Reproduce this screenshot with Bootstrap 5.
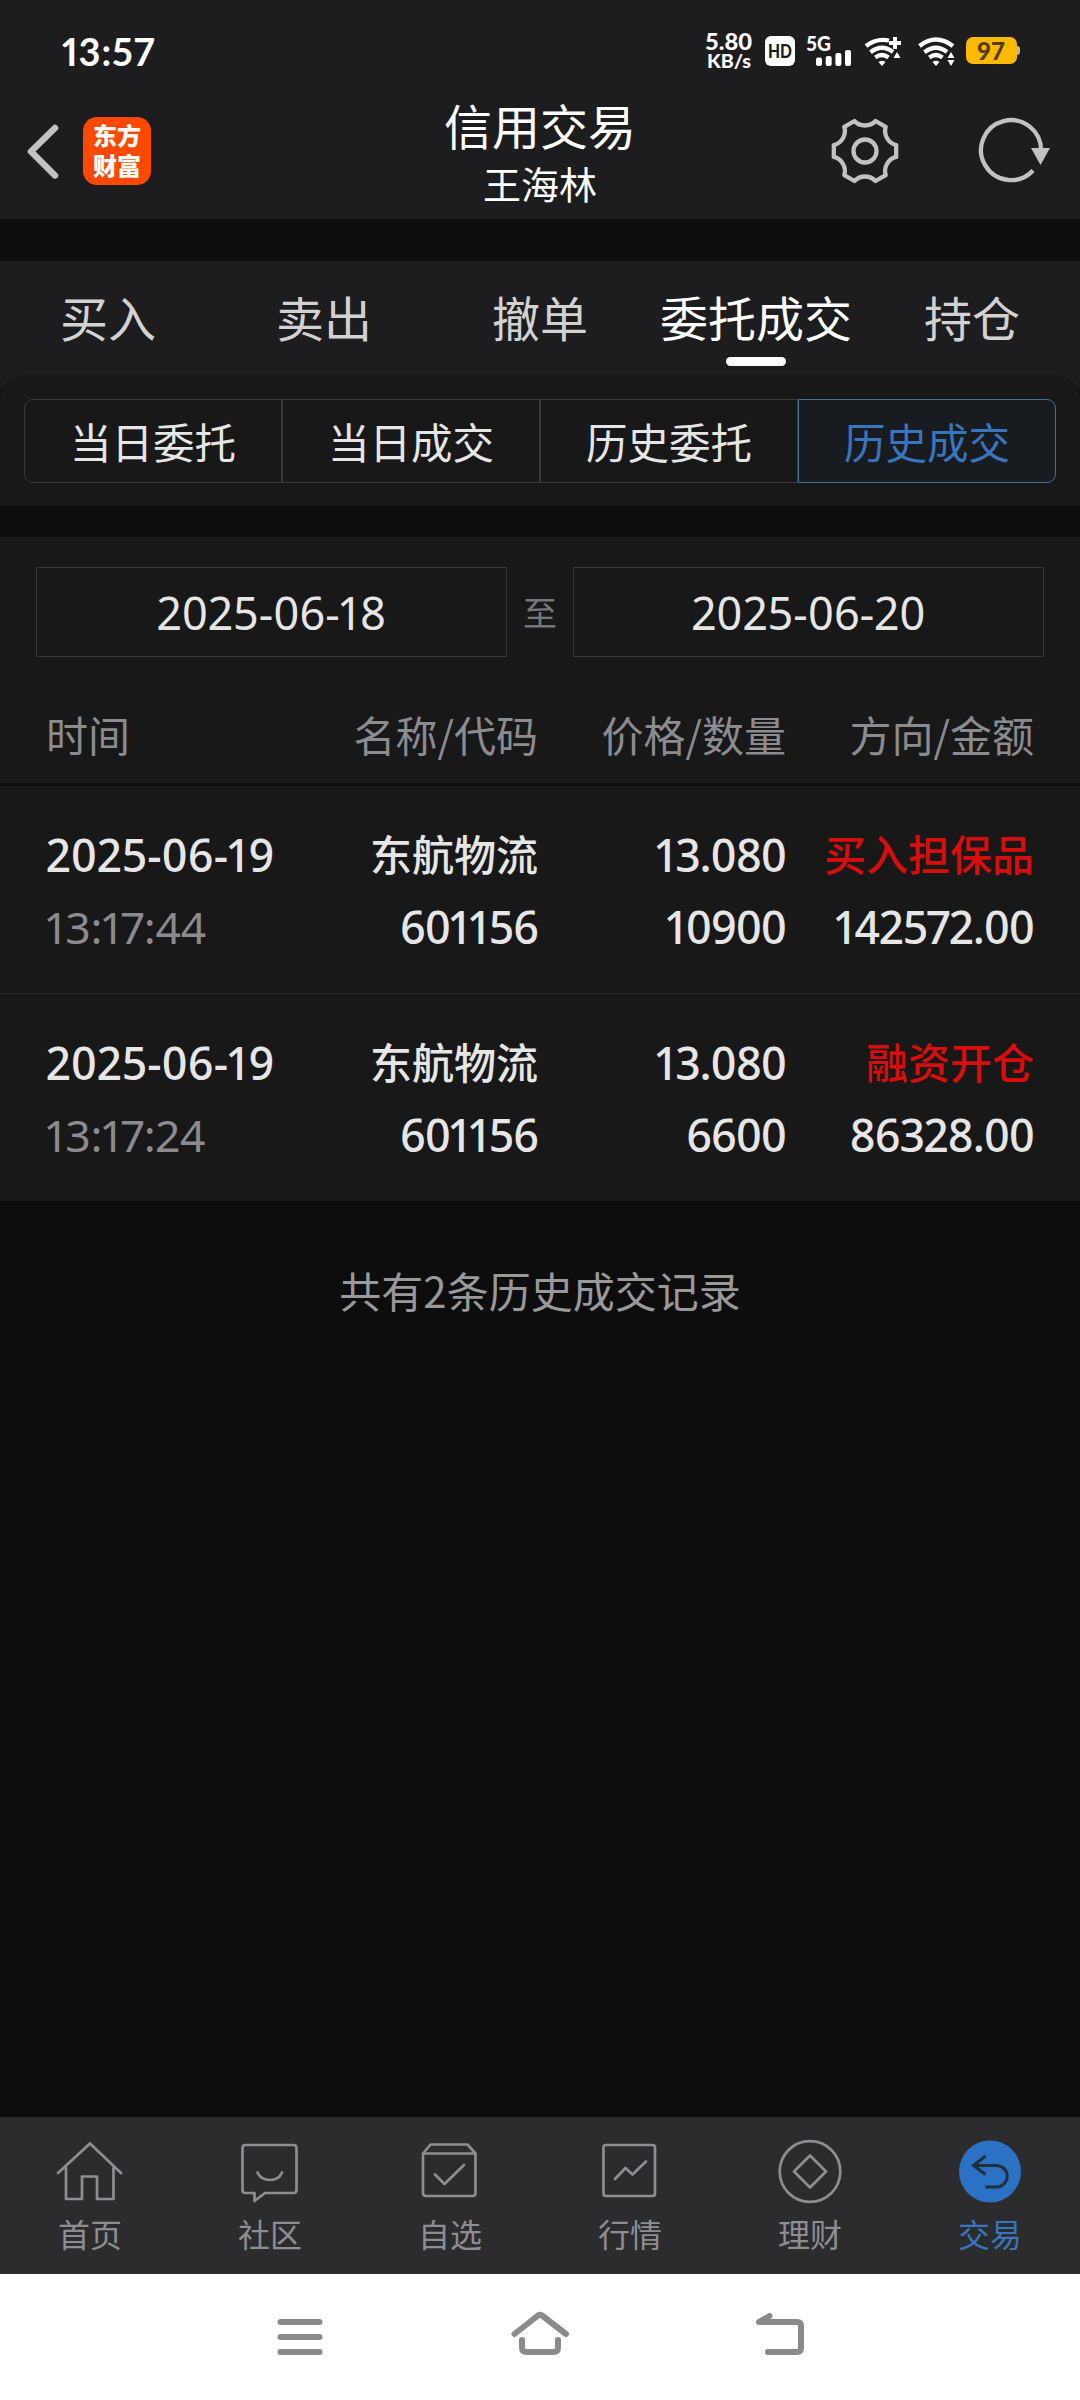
<!DOCTYPE html>
<html lang="zh-CN">
<head>
<meta charset="utf-8">
<meta name="viewport" content="width=device-width, initial-scale=1">
<title>信用交易</title>
<link rel="stylesheet" href="https://cdn.jsdelivr.net/npm/bootstrap@5.3.0/dist/css/bootstrap.min.css">
<style>
:root{--bar:#1d1d1f;--panel:#181818;--ground:#0d0d0d;--line:#383838;--ink:#e6e6e6;--dim:#8b8b90;--blue:#3875bd}
body{width:1080px;height:2400px;background:var(--ground);color:var(--ink);font-family:"Noto Sans CJK SC",sans-serif;font-size:42px;line-height:1;overflow:hidden}
svg{display:block;flex:none;overflow:visible}
.topbar{height:219px;background:var(--bar);color:#fff}
.statusbar{height:96px;padding:5px 60px 0 60px;font-family:Lato,"Noto Sans CJK SC",sans-serif}
.clock{font-size:38px;font-weight:700;font-feature-settings:"pnum";letter-spacing:.9px;padding-left:2px}
.titlebar{height:110px}
.titlebar>div{height:110px}
.titlebar-title{font-size:48px;line-height:57px}
.titlebar-user{font-size:38px;line-height:60px}
.brand-tile{width:68px;height:68px;border-radius:14px;background:#ff4800;font-size:24px;font-weight:900;line-height:30px;padding-top:3px;margin-left:24px}
.tabs-main{height:114px;margin-top:42px;background:var(--bar);font-size:48px;color:#d2d2d2}
.tabs-main .nav-link{width:216px;height:114px;padding:0;line-height:111px;color:inherit;position:relative;white-space:nowrap}
.tabs-main .nav-link.active{color:#fff}
.tabs-main .nav-link.active::after{content:"";position:absolute;left:78px;top:96px;width:60px;height:9px;border-radius:4.5px;background:#fff}
.seg-wrap{height:131px;background:linear-gradient(var(--bar) 15px,var(--ground) 15px)}
.seg-panel{height:131px;background:var(--panel);border-radius:24px 24px 0 0;padding:24px 24px 0}
.seg-panel .btn-group{height:84px}
.seg-panel .btn{flex:1 1 0;padding:0;font-size:41.5px;line-height:79px;color:var(--ink);border:1px solid var(--line);border-radius:9px;white-space:nowrap}
.seg-panel .btn-group>.btn:not(:first-child){margin-left:0}
.seg-panel .btn.active{color:var(--blue);border-color:#42719f;background:#181b20}
.records{margin-top:31px;background:var(--panel)}
.range-row{padding:30px 36px 0}
.date-box{width:471px;height:90px;border:1px solid var(--line);line-height:90px;font-family:"Noto Sans",sans-serif;font-feature-settings:"pnum";font-size:45px}
.range-sep{font-size:34px;color:#77777b}
.grid4{display:grid;grid-template-columns:236px 256px 248px 248px;padding:0 46px}
.grid4>*{white-space:nowrap;text-align:right}
.grid4>:first-child{text-align:left}
.thead-row{height:129px;line-height:154px;color:var(--dim);border-bottom:3px solid var(--ground)}
.trade{height:208px;padding-top:31px;line-height:72px;font-weight:500;border-bottom:1px solid #292929}
.trade:last-child{height:207px;border:0}
.trade div>div{height:72px}
.num{font-family:"Noto Sans",sans-serif;font-feature-settings:"pnum";font-size:44.5px;line-height:75px;letter-spacing:-1.1px}
.trade>:first-child{letter-spacing:0}
.stamp{color:var(--dim);font-weight:400;letter-spacing:-.3px}
.buy{color:#d80d0d}
.tally{padding-top:61px;line-height:55px;color:#999}
.tabbar{height:157px;background:#2c2c2e;color:#8e8e92;font-size:32px;line-height:52px;padding-top:20px}
.tabbar a{width:180px;color:inherit}
.tabbar a.active{color:var(--blue)}
.sysbar{height:126px;background:#fff}
.stroke-dim{fill:none;stroke:#8e8e92;stroke-width:2.7;stroke-linejoin:round;stroke-linecap:round}
.stroke-top{fill:none;stroke:#c2c2c2;stroke-width:4.3;stroke-linejoin:round}
.stroke-sys{fill:none;stroke:#8b8b8b;stroke-width:6;stroke-linejoin:round;stroke-linecap:round}
</style>
</head>
<body class="d-flex flex-column">
<header class="topbar">
  <div class="statusbar d-flex justify-content-between align-items-center">
    <span class="clock">13:57</span>
    <div class="d-flex align-items-center text-white">
      <svg width="48" height="36" viewBox="705 33 48 36" fill="#fff" font-weight="900"><text x="705" y="50" font-size="22" textLength="47" lengthAdjust="spacingAndGlyphs">5.80</text><text x="707" y="68" font-size="19" textLength="44" lengthAdjust="spacingAndGlyphs">KB/s</text></svg>
      <svg style="margin-left:12px" width="30" height="30" viewBox="765 36 30 30"><rect x="765" y="36" width="30" height="30" rx="6" fill="#fff"/><text x="768" y="58" font-size="19.500" font-weight="900" fill="#1d1d1f" textLength="24" lengthAdjust="spacingAndGlyphs">HD</text></svg>
      <svg style="margin-left:12px" width="45" height="30" viewBox="807 36 45 30" fill="#fff"><text x="806" y="50.500" font-size="20" font-weight="900" textLength="25" lengthAdjust="spacingAndGlyphs">5G</text><rect x="816" y="57.500" width="6" height="8.500" rx="2"/><rect x="825.700" y="56" width="6" height="10" rx="2"/><rect x="835.400" y="53" width="6" height="13" rx="2"/><rect x="845" y="50" width="6" height="16" rx="2"/></svg>
      <svg style="margin-left:12px" width="38" height="30" viewBox="864 36 38 30" fill="none" stroke="#fff" stroke-width="4.300"><path d="M866 46Q876 38 889 40.500M870.500 52.200Q882 43.500 893 52M875.300 57.500Q882 52.500 888.500 57.500"/><path d="M878.500 62Q882 59.500 885.500 62L882 66Z" fill="#fff" stroke="none"/><path d="M895 37V49M889 43H901" stroke-width="4"/><path d="M893.500 58L897 52L900.500 58Z" fill="#fff" stroke="none"/></svg>
      <svg style="margin-left:16px" width="38" height="30" viewBox="918 36 38 30" fill="none" stroke="#fff" stroke-width="4.300"><path d="M919.500 46Q936 33 953 46M924.500 52.200Q936 43.500 947 52M929.300 57.500Q936 52.500 942.500 57.500"/><path d="M932.500 62Q936 59.500 939.500 62L936 66Z" fill="#fff" stroke="none"/><path d="M947.500 58L951 52L954.500 58ZM947.500 60L951 66L954.500 60Z" fill="#fff" stroke="none"/></svg>
      <svg style="margin-left:10px" width="54" height="28" viewBox="966 39 54 28"><rect x="1012" y="48" width="8" height="9" rx="3" fill="#b6b6b6"/><rect x="966" y="39" width="51" height="27" rx="7" fill="#ffb900"/><text x="977" y="61.700" font-size="25" font-weight="900" fill="#553d00" textLength="28" lengthAdjust="spacingAndGlyphs">97</text></svg>
    </div>
  </div>
  <div class="titlebar row g-0">
    <div class="col-4 d-flex align-items-center">
      <svg style="margin-left:27px" width="32" height="60" viewBox="27 121 32 60"><path class="stroke-top" style="stroke-width:6.500;stroke-linecap:round" d="M55 128L31 151.500L55 175.500"/></svg>
      <div class="brand-tile text-center">东方<br>财富</div>
    </div>
    <div class="col-4 text-center"><div class="titlebar-title">信用交易</div><div class="titlebar-user">王海林</div></div>
    <div class="col-4 d-flex align-items-center justify-content-end">
      <svg width="70" height="70" viewBox="-35 -35 70 70"><path class="stroke-top" d="M-10.500-30C-5-24 5-24 10.500-30L20.700-24.100C18.300-16.300 23.300-7.700 31.200-5.900V5.900C23.300 7.700 18.300 16.300 20.700 24.100L10.500 30C5 24-5 24-10.500 30L-20.700 24.100C-18.300 16.300-23.300 7.700-31.200 5.900V-5.900C-23.300-7.700-18.300-16.300-20.700-24.100Z"/><circle class="stroke-top" r="11.500"/></svg>
      <svg style="margin:0 29px 0 75px" width="76" height="70" viewBox="975 116 76 70"><path class="stroke-top" d="M1033 170.500A30 30 0 1 1 1041 151"/><path d="M1031 148H1050L1040.500 165Z" fill="#c2c2c2"/></svg>
    </div>
  </div>
</header>

<nav class="nav tabs-main text-center flex-nowrap">
  <a class="nav-link">买入</a><a class="nav-link">卖出</a><a class="nav-link">撤单</a><a class="nav-link active">委托成交</a><a class="nav-link">持仓</a>
</nav>
<div class="seg-wrap"><div class="seg-panel">
  <div class="btn-group w-100">
    <button class="btn">当日委托</button><button class="btn">当日成交</button><button class="btn">历史委托</button><button class="btn active">历史成交</button>
  </div>
</div></div>

<main class="flex-grow-1">
  <section class="records">
    <div class="range-row d-flex justify-content-between align-items-center text-center">
      <div class="date-box">2025-06-18</div><span class="range-sep">至</span><div class="date-box">2025-06-20</div>
    </div>
    <div class="grid4 thead-row"><div>时间</div><div>名称/代码</div><div>价格/数量</div><div>方向/金额</div></div>
    <div class="grid4 trade">
      <div class="num"><div>2025-06-19</div><div class="stamp">13:17:44</div></div>
      <div><div>东航物流</div><div class="num">601156</div></div>
      <div class="num"><div>13.080</div><div>10900</div></div>
      <div><div class="buy">买入担保品</div><div class="num">142572.00</div></div>
    </div>
    <div class="grid4 trade">
      <div class="num"><div>2025-06-19</div><div class="stamp">13:17:24</div></div>
      <div><div>东航物流</div><div class="num">601156</div></div>
      <div class="num"><div>13.080</div><div>6600</div></div>
      <div><div class="buy">融资开仓</div><div class="num">86328.00</div></div>
    </div>
  </section>
  <div class="tally text-center">共有2条历史成交记录</div>
</main>

<nav class="tabbar d-flex text-center">
  <a class="text-decoration-none"><svg class="mx-auto stroke-dim" width="70" height="70" viewBox="55 2137 70 70"><path d="M58 2173L90 2143.500L121 2173M66 2168V2199H82V2176.500H97V2199H113.500V2168"/></svg>首页</a>
  <a class="text-decoration-none"><svg class="mx-auto stroke-dim" width="70" height="70" viewBox="235 2137 70 70"><path d="M245.500 2145H293.500Q296.500 2145 296.500 2148V2190Q296.500 2193 293.500 2193H265L254.500 2201V2193H245.500Q242.500 2193 242.500 2190V2148Q242.500 2145 245.500 2145ZM257.500 2172.500C262 2182.500 278 2182.500 282 2172.500"/></svg>社区</a>
  <a class="text-decoration-none"><svg class="mx-auto stroke-dim" width="70" height="70" viewBox="415 2137 70 70"><path d="M423 2153.500L430.500 2144.500H467.500L475.500 2153.500V2193Q475.500 2196 472.500 2196H426Q423 2196 423 2193ZM423 2153.500H475.500M435 2174.500L444.500 2184L464 2165"/></svg>自选</a>
  <a class="text-decoration-none"><svg class="mx-auto stroke-dim" width="70" height="70" viewBox="595 2137 70 70"><rect x="603.500" y="2145" width="51.500" height="51" rx="2.500"/><path d="M615 2179L625.500 2168L632.500 2174.500L646 2161.500"/></svg>行情</a>
  <a class="text-decoration-none"><svg class="mx-auto stroke-dim" width="70" height="70" viewBox="774.500 2137 70 70"><circle cx="809.500" cy="2171.500" r="30.300"/><path d="M809.500 2155.500L825.500 2171.500L809.500 2187.500L793.500 2171.500Z"/></svg>理财</a>
  <a class="text-decoration-none active"><svg class="mx-auto" width="70" height="70" viewBox="954.500 2137 70 70"><circle cx="989.500" cy="2171.500" r="31" fill="#2b72c5"/><path d="M985 2156L973 2165.500L985 2174.500M973 2165.500H996A10.700 10.700 0 0 1 996 2187H985" fill="none" stroke="#21303f" stroke-width="3"/></svg>交易</a>
</nav>
<div class="sysbar d-flex justify-content-center align-items-center">
  <svg class="stroke-sys" width="60" height="60" viewBox="270 2307 60 60"><path d="M280.500 2322H319.500M280.500 2337H319.500M280.500 2352H319.500"/></svg>
  <svg class="stroke-sys" style="margin:0 180px" width="60" height="60" viewBox="510 2307 60 60"><path d="M514.500 2334L538 2315.500Q540 2314 542 2315.500L566 2334M522 2340V2347.500Q522 2352 526.500 2352H553.500Q558 2352 558 2347.500V2340"/></svg>
  <svg class="stroke-sys" width="60" height="60" viewBox="750 2307 60 60"><path d="M769.500 2316L759 2322H797Q801 2322 801 2326V2348Q801 2352 797 2352H768"/></svg>
</div>
<script src="https://cdn.jsdelivr.net/npm/bootstrap@5.3.0/dist/js/bootstrap.bundle.min.js"></script>
</body>
</html>
